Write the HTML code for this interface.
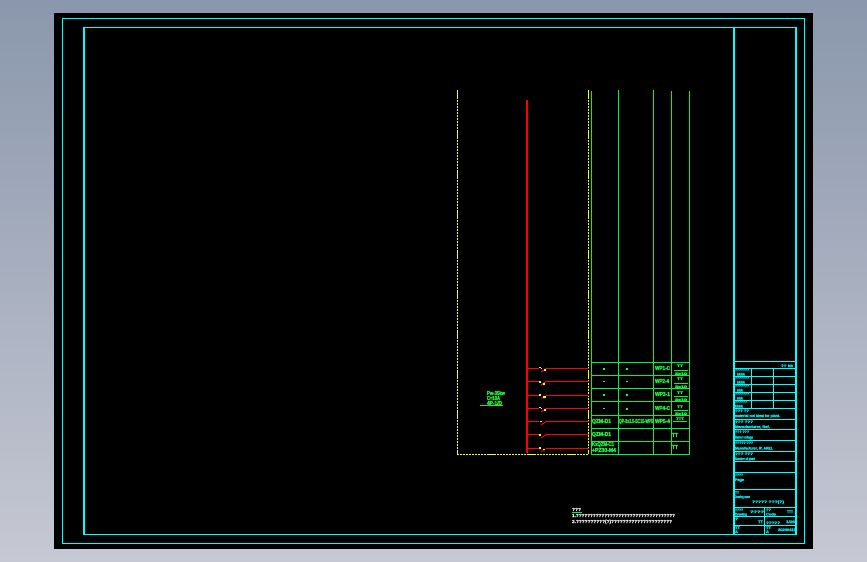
<!DOCTYPE html>
<html><head><meta charset="utf-8"><style>
html,body{margin:0;padding:0;width:867px;height:562px;overflow:hidden;background:linear-gradient(#8a97ac,#c6c8d3)}
svg{position:absolute;left:0;top:0}
text{font-family:"Liberation Sans",sans-serif;font-weight:bold}
.g text{fill:#1fff3f;stroke:#1fff3f;stroke-width:.35;font-size:5px}
.c text{fill:#00ffff;stroke:#00ffff;stroke-width:.25;font-size:4px}
.w text{fill:#fff;stroke:#fff;stroke-width:.2;font-size:4.5px}
</style></head><body>
<svg width="867" height="562" viewBox="0 0 867 562" shape-rendering="crispEdges">
<rect x="54" y="13" width="759" height="536" fill="#000"/>
<g fill="none" stroke="#00ffff">
<rect x="62.5" y="18.5" width="742" height="525"/>
<path d="M83 27.500H797M83 534.500H797"/>
<path stroke-width="2" d="M84 27V535M796 27V535M734 27V535"/>
<path d="M734 361.500H796M734 368.500H796M734 376.500H796M734 384.500H796M734 392.500H796M734 400.500H796M734 408.500H796M734 419.500H796M734 429.500H796M734 440.500H796M734 451.500H796M734 461.500H796M734 472.500H796M734 489.500H796M734 507.500H796M734 516.500H796M734 525.500H796M751.500 368V408M773.500 368V408M764.500 507V534"/>
</g>
<g fill="none" stroke="#00f04a">
<path d="M591.500 91V454M618.500 90V454M653.500 90V454M671.500 91V454M689.500 91V454M591 362.500H690M591 375.500H690M591 388.500H690M591 401.500H690M591 415.500H690M591 428.500H690M591 441.500H690M591 454.500H690"/>
<path d="M480 405.500H503M674 383.500H688M674 370.500H688M674 396.500H688M674 410.500H688M673 421.500H687M572 512.500H582"/>
</g>
<g fill="none" stroke="#ffff00">
<path stroke-dasharray="9 1 2 1 2 1 2 1 2 1 2 1 2 1 2 1 2 1 2 1 2 1" d="M457.500 90V454M588.500 90V454"/>
<path stroke-dasharray="2 1 2 1 2 1 2 1 2 1 2 1 2 1 2 1 2 1 2 1 9 1" d="M457 454.500H589"/>
</g>
<g fill="none" stroke="#ff0000">
<rect x="526" y="100" width="2" height="353" fill="#ff0000" stroke="none"/>
<path d="M528 368.500H539M547 368.500H589M528 381.500H539M547 381.500H589M528 395.500H539M546 395.500H589M528 408.500H539M547 408.500H589M528 421.500H539M547 421.500H589M528 434.500H539M547 434.500H589M528 448.500H539M546 448.500H589"/>
<path d="M541 372L547 368M541 385L547 381M541 398H545M541 412L547 408M541 425L547 421M541 438L547 434M541 451H545"/>
</g>
<g fill="#ffff00">
<rect x="539" y="367" width="2" height="1"/><rect x="541" y="368" width="1" height="1"/><rect x="544" y="369" width="2" height="2"/>
<rect x="539" y="381" width="2" height="2"/><rect x="543" y="383" width="2" height="2"/>
<rect x="539" y="394" width="2" height="2"/><rect x="543" y="396" width="3" height="2"/>
<rect x="539" y="407" width="2" height="1"/><rect x="541" y="408" width="1" height="1"/><rect x="544" y="409" width="2" height="2"/>
<rect x="540" y="421" width="2" height="1"/>
<rect x="539" y="434" width="2" height="2"/>
<rect x="539" y="447" width="2" height="2"/><rect x="543" y="449" width="2" height="1"/>
</g>
<g fill="#1fff3f">
<rect x="603" y="368" width="2" height="2"/><rect x="626" y="368" width="2" height="2"/>
<rect x="603" y="381" width="2" height="1"/><rect x="626" y="381" width="2" height="1"/>
<rect x="603" y="394" width="2" height="2"/><rect x="626" y="394" width="2" height="2"/>
<rect x="603" y="408" width="2" height="1"/><rect x="626" y="408" width="2" height="2"/>
</g>
<g class="g">
<text x="487" y="395" textLength="18" lengthAdjust="spacingAndGlyphs">Pw-35kw</text>
<text x="487" y="400" textLength="13" lengthAdjust="spacingAndGlyphs">C=10A</text>
<text x="487" y="405" textLength="15" lengthAdjust="spacingAndGlyphs">4P-1/D</text>
<text x="655" y="370" textLength="15" lengthAdjust="spacingAndGlyphs">WP1-C</text>
<text x="655" y="383" textLength="14" lengthAdjust="spacingAndGlyphs">WP2-4</text>
<text x="655" y="396" textLength="15" lengthAdjust="spacingAndGlyphs">WP3-1</text>
<text x="655" y="410" textLength="15" lengthAdjust="spacingAndGlyphs">WP4-C</text>
<text x="655" y="423" textLength="15" lengthAdjust="spacingAndGlyphs">WP5-4</text>
<text x="592" y="423" textLength="19" lengthAdjust="spacingAndGlyphs">QZM-D1</text>
<text x="619" y="423" textLength="34" lengthAdjust="spacingAndGlyphs">QP-3x2.5-SC15-WP5</text>
<text x="592" y="436" textLength="19" lengthAdjust="spacingAndGlyphs">QZM-D1</text>
<text x="592" y="446" textLength="22" lengthAdjust="spacingAndGlyphs">KxQZM-C1</text>
<text x="592" y="452" textLength="24" lengthAdjust="spacingAndGlyphs">+PZ30-M4</text>
<text x="677" y="367" textLength="6" lengthAdjust="spacingAndGlyphs" style="font-size:4px">TT</text><text x="675" y="375" textLength="12" lengthAdjust="spacingAndGlyphs" style="font-size:4px">3x10</text>
<text x="677" y="380" textLength="6" lengthAdjust="spacingAndGlyphs" style="font-size:4px">TT</text><text x="675" y="388" textLength="12" lengthAdjust="spacingAndGlyphs" style="font-size:4px">3x10</text>
<text x="677" y="394" textLength="6" lengthAdjust="spacingAndGlyphs" style="font-size:4px">TT</text><text x="675" y="401" textLength="12" lengthAdjust="spacingAndGlyphs" style="font-size:4px">3x10</text>
<text x="677" y="408" textLength="6" lengthAdjust="spacingAndGlyphs" style="font-size:4px">TT</text><text x="675" y="415" textLength="12" lengthAdjust="spacingAndGlyphs" style="font-size:4px">3x10</text>
<text x="676" y="420" textLength="8" lengthAdjust="spacingAndGlyphs" style="font-size:4px">TTT</text>
<text x="672" y="437" textLength="6" lengthAdjust="spacingAndGlyphs">TT</text>
<text x="672" y="449" textLength="6" lengthAdjust="spacingAndGlyphs">TT</text>
</g>
<g class="w">
<text x="572" y="511" textLength="9" lengthAdjust="spacingAndGlyphs">???</text>
<text x="572" y="517" textLength="103" lengthAdjust="spacingAndGlyphs">1.???????????????????????????????????</text>
<text x="572" y="523" textLength="100" lengthAdjust="spacingAndGlyphs">2.??????????(?)?????????????????????</text>
</g>
<g class="c">
<text x="781" y="367" textLength="12" lengthAdjust="spacingAndGlyphs">?? kk</text>
<text x="735" y="371" textLength="14" lengthAdjust="spacingAndGlyphs">???????</text><text x="737" y="375.500" textLength="8" lengthAdjust="spacingAndGlyphs">kkkk</text>
<text x="735" y="379" textLength="14" lengthAdjust="spacingAndGlyphs">???????</text><text x="737" y="383.500" textLength="8" lengthAdjust="spacingAndGlyphs">kkkk</text>
<text x="735" y="387" textLength="14" lengthAdjust="spacingAndGlyphs">???????</text><text x="737" y="391.500" textLength="6" lengthAdjust="spacingAndGlyphs">kkk</text>
<text x="735" y="395" textLength="14" lengthAdjust="spacingAndGlyphs">???????</text><text x="737" y="399.500" textLength="6" lengthAdjust="spacingAndGlyphs">kkk</text>
<text x="735" y="403" textLength="12" lengthAdjust="spacingAndGlyphs">??????</text><text x="735" y="407.500" textLength="8" lengthAdjust="spacingAndGlyphs">kkkk</text>
<text x="735" y="412" textLength="14" lengthAdjust="spacingAndGlyphs">??? ??</text>
<text x="735" y="417" textLength="45" lengthAdjust="spacingAndGlyphs">material not ideal for plant.</text>
<text x="735" y="423" textLength="18" lengthAdjust="spacingAndGlyphs">??? ???</text>
<text x="735" y="428" textLength="35" lengthAdjust="spacingAndGlyphs">Manufacturer, Ref.</text>
<text x="735" y="433" textLength="14" lengthAdjust="spacingAndGlyphs">??? ???</text>
<text x="735" y="438.500" textLength="18" lengthAdjust="spacingAndGlyphs">Rated voltage</text>
<text x="735" y="444" textLength="18" lengthAdjust="spacingAndGlyphs">????? ???</text>
<text x="735" y="449.500" textLength="38" lengthAdjust="spacingAndGlyphs">Manufacturer, IP, AREL</text>
<text x="735" y="455" textLength="18" lengthAdjust="spacingAndGlyphs">??? ???</text>
<text x="735" y="460" textLength="20" lengthAdjust="spacingAndGlyphs">Number of plant</text>
<text x="735" y="476" textLength="8" lengthAdjust="spacingAndGlyphs">????</text>
<text x="735" y="481" textLength="9" lengthAdjust="spacingAndGlyphs">Page</text>
<text x="735" y="494" textLength="4" lengthAdjust="spacingAndGlyphs">TT</text>
<text x="735" y="498" textLength="15" lengthAdjust="spacingAndGlyphs">Drawing name</text>
<text x="752" y="503" textLength="32" lengthAdjust="spacingAndGlyphs">????? ???(?)</text>
<text x="735" y="511" textLength="8" lengthAdjust="spacingAndGlyphs">????</text>
<text x="735" y="515.500" textLength="12" lengthAdjust="spacingAndGlyphs">Drawing</text>
<text x="750" y="513" textLength="14" lengthAdjust="spacingAndGlyphs">????</text>
<text x="766" y="511" textLength="5" lengthAdjust="spacingAndGlyphs">??</text>
<text x="766" y="515.500" textLength="10" lengthAdjust="spacingAndGlyphs">Code</text>
<text x="787" y="513" textLength="6" lengthAdjust="spacingAndGlyphs">TTT</text>
<text x="735" y="520" textLength="3" lengthAdjust="spacingAndGlyphs">?</text>
<text x="758" y="523" textLength="5" lengthAdjust="spacingAndGlyphs">TT</text>
<text x="766" y="524" textLength="14" lengthAdjust="spacingAndGlyphs">?????</text>
<text x="786" y="523" textLength="9" lengthAdjust="spacingAndGlyphs">1/26</text>
<text x="735" y="529" textLength="5" lengthAdjust="spacingAndGlyphs">TT</text>
<text x="735" y="533" textLength="3" lengthAdjust="spacingAndGlyphs">A</text>
<text x="766" y="529" textLength="5" lengthAdjust="spacingAndGlyphs">TT</text>
<text x="766" y="533" textLength="3" lengthAdjust="spacingAndGlyphs">A</text>
<text x="778" y="531" textLength="18" lengthAdjust="spacingAndGlyphs">20200415</text>
</g>
</svg>
</body></html>
